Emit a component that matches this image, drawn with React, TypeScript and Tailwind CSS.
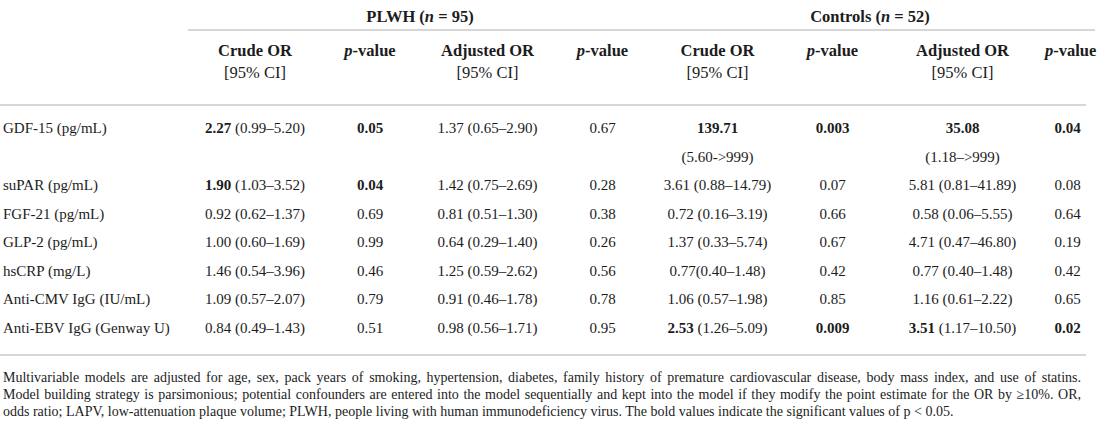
import React from "react"

type Cell = { b?: string; t: string }
type Row = { label: string; cells: Cell[]; extra?: string[] }

const cols = "grid grid-cols-[190px_130px_100px_135px_95px_135px_95px_165px_45px]"

const rows: Row[] = [
  {
    label: "GDF-15 (pg/mL)",
    cells: [
      { b: "2.27", t: " (0.99–5.20)" },
      { b: "0.05", t: "" },
      { t: "1.37 (0.65–2.90)" },
      { t: "0.67" },
      { b: "139.71", t: "" },
      { b: "0.003", t: "" },
      { b: "35.08", t: "" },
      { b: "0.04", t: "" },
    ],
    extra: ["", "", "", "", "(5.60->999)", "", "(1.18–>999)", ""],
  },
  {
    label: "suPAR (pg/mL)",
    cells: [
      { b: "1.90", t: " (1.03–3.52)" },
      { b: "0.04", t: "" },
      { t: "1.42 (0.75–2.69)" },
      { t: "0.28" },
      { t: "3.61 (0.88–14.79)" },
      { t: "0.07" },
      { t: "5.81 (0.81–41.89)" },
      { t: "0.08" },
    ],
  },
  {
    label: "FGF-21 (pg/mL)",
    cells: [
      { t: "0.92 (0.62–1.37)" },
      { t: "0.69" },
      { t: "0.81 (0.51–1.30)" },
      { t: "0.38" },
      { t: "0.72 (0.16–3.19)" },
      { t: "0.66" },
      { t: "0.58 (0.06–5.55)" },
      { t: "0.64" },
    ],
  },
  {
    label: "GLP-2 (pg/mL)",
    cells: [
      { t: "1.00 (0.60–1.69)" },
      { t: "0.99" },
      { t: "0.64 (0.29–1.40)" },
      { t: "0.26" },
      { t: "1.37 (0.33–5.74)" },
      { t: "0.67" },
      { t: "4.71 (0.47–46.80)" },
      { t: "0.19" },
    ],
  },
  {
    label: "hsCRP (mg/L)",
    cells: [
      { t: "1.46 (0.54–3.96)" },
      { t: "0.46" },
      { t: "1.25 (0.59–2.62)" },
      { t: "0.56" },
      { t: "0.77(0.40–1.48)" },
      { t: "0.42" },
      { t: "0.77 (0.40–1.48)" },
      { t: "0.42" },
    ],
  },
  {
    label: "Anti-CMV IgG (IU/mL)",
    cells: [
      { t: "1.09 (0.57–2.07)" },
      { t: "0.79" },
      { t: "0.91 (0.46–1.78)" },
      { t: "0.78" },
      { t: "1.06 (0.57–1.98)" },
      { t: "0.85" },
      { t: "1.16 (0.61–2.22)" },
      { t: "0.65" },
    ],
  },
  {
    label: "Anti-EBV IgG (Genway U)",
    cells: [
      { t: "0.84 (0.49–1.43)" },
      { t: "0.51" },
      { t: "0.98 (0.56–1.71)" },
      { t: "0.95" },
      { b: "2.53", t: " (1.26–5.09)" },
      { b: "0.009", t: "" },
      { b: "3.51", t: " (1.17–10.50)" },
      { b: "0.02", t: "" },
    ],
  },
]

const PValue = () => (
  <div className="whitespace-nowrap text-center font-bold leading-[22px]">
    <span className="italic">p</span>-value
  </div>
)

const OrHead = ({ kind }: { kind: string }) => (
  <div className="whitespace-nowrap text-center leading-[22px]">
    <div className="font-bold">{kind} OR</div>
    <div>[95% CI]</div>
  </div>
)

export default function App() {
  return (
    <div
      className="h-[423px] w-[1097px] bg-white text-[15px] text-[#1c1c1c]"
      style={{ fontFamily: '"Liberation Serif", "Times New Roman", serif' }}
    >
      <div className={cols + " pt-[7px] text-[16.5px]"}>
        <div />
        <div className="col-span-4 pb-[2px] text-center font-bold leading-[20px]">
          PLWH (<span className="italic">n</span> = 95)
        </div>
        <div className="col-span-4 pb-[2px] text-center font-bold leading-[20px]">
          Controls (<span className="italic">n</span> = 52)
        </div>
      </div>
      <div className="flex">
        <div className="w-[188px]" />
        <div className="h-[2px] w-[907px] bg-[#d6d6d6]" />
      </div>
      <div className={cols + " pb-[20px] pt-[9px] text-[16.5px]"}>
        <div />
        <OrHead kind="Crude" />
        <PValue />
        <OrHead kind="Adjusted" />
        <PValue />
        <OrHead kind="Crude" />
        <PValue />
        <OrHead kind="Adjusted" />
        <PValue />
      </div>
      <div className="h-[2px] w-[1086px] bg-[#d6d6d6]" />
      <div className="pb-[12px] pt-[8px]">
        {rows.map((r) => (
          <div key={r.label}>
            <div className={cols + " leading-[28.5px]"}>
              <div className="pl-[3px]">{r.label}</div>
              {r.cells.map((c, i) => (
                <div key={i} className="whitespace-nowrap text-center">
                  {c.b && <span className="font-bold">{c.b}</span>}
                  {c.t}
                </div>
              ))}
            </div>
            {r.extra && (
              <div className={cols + " leading-[28.5px]"}>
                <div />
                {r.extra.map((e, i) => (
                  <div key={i} className="text-center">
                    {e}
                  </div>
                ))}
              </div>
            )}
          </div>
        ))}
      </div>
      <div className="h-[2px] w-[1086px] bg-[#d6d6d6]" />
      <div className="w-[1081px] pl-[3px] pt-[13px] text-[14px] leading-[17px]">
        <div className="text-justify [text-align-last:justify]">
          Multivariable models are adjusted for age, sex, pack years of smoking, hypertension, diabetes, family history
          of premature cardiovascular disease, body mass index, and use of statins.
        </div>
        <div className="text-justify [text-align-last:justify]">
          Model building strategy is parsimonious; potential confounders are entered into the model sequentially and
          kept into the model if they modify the point estimate for the OR by ≥10%. OR,
        </div>
        <div className="whitespace-nowrap">
          odds ratio; LAPV, low-attenuation plaque volume; PLWH, people living with human immunodeficiency virus. The
          bold values indicate the significant values of p &lt; 0.05.
        </div>
      </div>
    </div>
  )
}
